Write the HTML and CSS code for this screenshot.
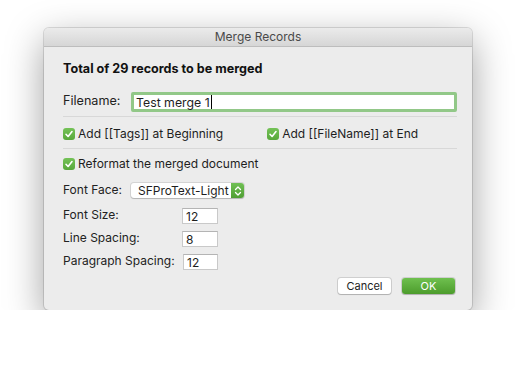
FILE: index.html
```html
<!DOCTYPE html>
<html lang="en">
<head>
    <meta charset="UTF-8">
    <meta name="viewport" content="width=device-width, initial-scale=1.0">
    <title>Merge Records</title>
    <link rel="stylesheet" href="styles.css">
</head>
<body>

    <!-- Merge dialog window -->
    <div class="window">
        <div class="titlebar">Merge Records</div>

        <div class="content">
            <div class="heading">Total of 29 records to be merged</div>

            <div class="filename-row">
                <label class="label">Filename:</label>
                <div class="text-field focused">Test merge 1<span class="caret"></span></div>
            </div>

            <div class="separator"></div>

            <div class="check-row">
                <div class="check">
                    <span class="box"><svg viewBox="0 0 12 12" width="12" height="12"><path d="M3 6.3 L5.1 8.5 L9 3.6" fill="none" stroke="#fff" stroke-width="1.6" stroke-linecap="round" stroke-linejoin="round"/></svg></span>
                    Add [[Tags]] at Beginning
                </div>
                <div class="check second">
                    <span class="box"><svg viewBox="0 0 12 12" width="12" height="12"><path d="M3 6.3 L5.1 8.5 L9 3.6" fill="none" stroke="#fff" stroke-width="1.6" stroke-linecap="round" stroke-linejoin="round"/></svg></span>
                    Add [[FileName]] at End
                </div>
            </div>

            <div class="separator"></div>

            <div class="check-row reformat">
                <div class="check">
                    <span class="box"><svg viewBox="0 0 12 12" width="12" height="12"><path d="M3 6.3 L5.1 8.5 L9 3.6" fill="none" stroke="#fff" stroke-width="1.6" stroke-linecap="round" stroke-linejoin="round"/></svg></span>
                    Reformat the merged document
                </div>
            </div>

            <div class="face-row">
                <span class="label">Font Face:</span>
                <div class="popup">
                    <span class="popup-value">SFProText-Light</span>
                    <span class="stepper"><svg viewBox="0 0 12 14" width="12" height="14"><path d="M3.5 5.5 L6 3 L8.5 5.5 M3.5 8.5 L6 11 L8.5 8.5" fill="none" stroke="#fff" stroke-width="1.3" stroke-linecap="round" stroke-linejoin="round"/></svg></span>
                </div>
            </div>

            <div class="spacing-grid">
                <span class="label">Font Size:</span>
                <div class="num-field">12</div>
                <span class="label">Line Spacing:</span>
                <div class="num-field">8</div>
                <span class="label">Paragraph Spacing:</span>
                <div class="num-field shifted">12</div>
            </div>

            <div class="buttons">
                <button class="btn">Cancel</button>
                <button class="btn default">OK</button>
            </div>
        </div>
    </div>

</body>
</html>
```

FILE: styles.css
```css
body {
    font-family: 'Inter', 'Liberation Sans', sans-serif;
    background-color: #ffffff;
    margin: 0;
    padding: 0;
    color: #1e1e1e;
    font-size: 12px;
}

.window {
    width: 428px;
    height: 282px;
    margin: 28px 0 0 44px;
    background-color: #ececec;
    border-radius: 5px;
    box-shadow: 0 0 0 1px rgba(0, 0, 0, 0.12), 0 12px 38px rgba(0, 0, 0, 0.38);
    box-sizing: border-box;
    overflow: hidden;
}

.titlebar {
    height: 18px;
    line-height: 18px;
    text-align: center;
    font-size: 12px;
    color: #4a4a4a;
    background: linear-gradient(#ebebeb, #d6d6d6);
    border-bottom: 1px solid #bdbdbd;
}

.content {
    padding: 14px 15px 0 19px;
}

.heading {
    font-weight: 700;
    font-size: 12.6px;
    line-height: 16px;
    color: #111;
}

.filename-row {
    display: flex;
    align-items: flex-start;
    margin-top: 15px;
}

.label {
    line-height: 16px;
    color: #222;
    white-space: nowrap;
}

.filename-row .label {
    width: 68px;
    padding-top: 1px;
    font-size: 12.6px;
}

.text-field {
    flex: 1;
    height: 20px;
    box-sizing: border-box;
    background-color: #fff;
    padding: 0 4px;
    line-height: 17px;
}

.text-field.focused {
    border: 3px solid #92c888;
    border-radius: 2px;
    padding-left: 2px;
    line-height: 15px;
    font-size: 12.3px;
}

.caret {
    display: inline-block;
    width: 1px;
    height: 14px;
    background-color: #000;
    vertical-align: -2px;
    margin-left: 1px;
}

.separator {
    height: 1px;
    background-color: #d8d8d8;
    margin: 4px 0 0 0;
}

.check-row {
    display: flex;
    margin-top: 9px;
    margin-bottom: 6px;
}

.check-row.reformat {
    margin-top: 7px;
    margin-bottom: 0;
}

.check {
    display: flex;
    align-items: center;
    gap: 3px;
    line-height: 16px;
    white-space: nowrap;
}

.check.second {
    margin-left: 44px;
}

.box {
    display: inline-flex;
    width: 12px;
    height: 12px;
    border-radius: 3px;
    background: linear-gradient(#74c257, #58a83b);
}

.face-row {
    display: flex;
    align-items: center;
    margin-top: 11px;
}

.face-row .label {
    width: 68px;
    margin-top: -2px;
}

.popup {
    display: flex;
    align-items: center;
    width: 113px;
    height: 15px;
    background-color: #fff;
    border-radius: 3px;
    box-shadow: 0 0 0 1px rgba(0, 0, 0, 0.1), 0 1px 1px rgba(0, 0, 0, 0.15);
    overflow: hidden;
}

.popup-value {
    flex: 1;
    padding-left: 7px;
    line-height: 15px;
    white-space: nowrap;
}

.stepper {
    display: flex;
    align-items: center;
    justify-content: center;
    width: 13px;
    height: 15px;
    background: linear-gradient(#70c054, #4f9e33);
}

.spacing-grid {
    display: grid;
    grid-template-columns: 119px 36px;
    row-gap: 7px;
    margin-top: 10px;
    align-items: center;
}

.spacing-grid .label {
    margin-top: -2px;
}

.num-field {
    height: 16px;
    box-sizing: border-box;
    background-color: #fff;
    border: 1px solid #c9c9c9;
    border-top-color: #b4b4b4;
    padding-left: 3px;
    line-height: 15px;
}

.num-field.shifted {
    margin-left: 1px;
}

.buttons {
    display: flex;
    justify-content: flex-end;
    gap: 11px;
    margin-top: 8px;
    margin-right: 2px;
}

.btn {
    width: 53px;
    height: 16px;
    padding: 0;
    font-family: inherit;
    font-size: 11px;
    color: #222;
    background-color: #fff;
    border: none;
    border-radius: 3px;
    box-shadow: 0 0 0 1px rgba(0, 0, 0, 0.12), 0 1px 1px rgba(0, 0, 0, 0.15);
    cursor: pointer;
}

.btn.default {
    color: #fff;
    background: linear-gradient(#6fc04f, #4c9c2c);
}
```
